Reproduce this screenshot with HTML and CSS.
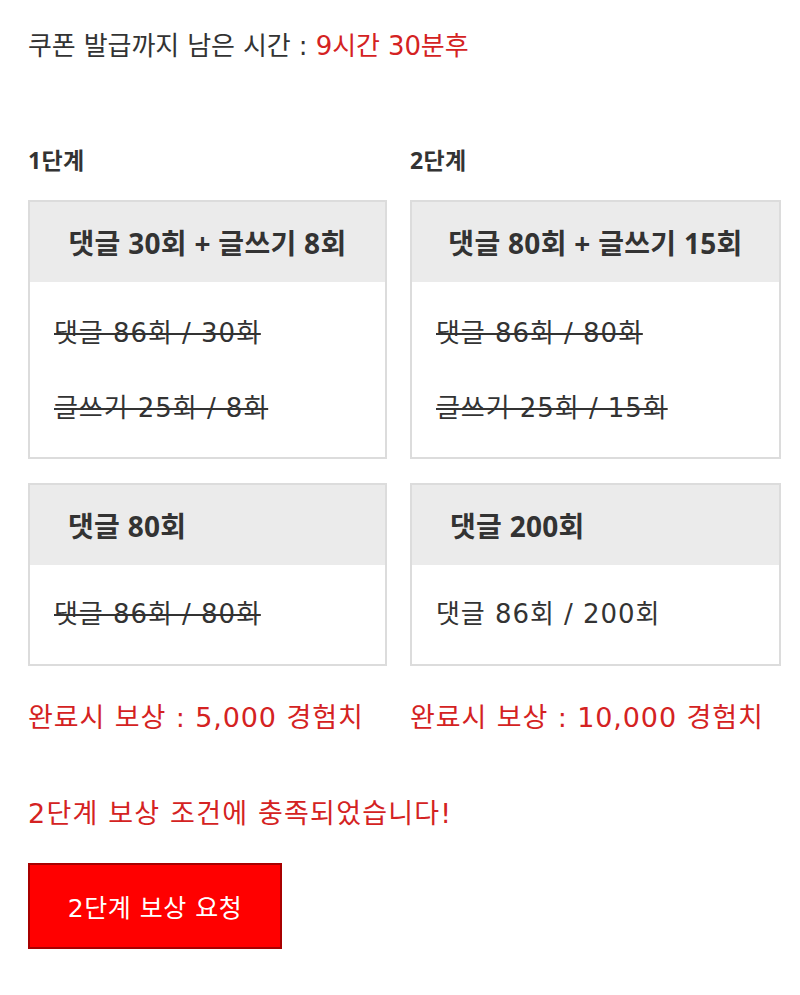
FILE: index.html
```html
<!DOCTYPE html>
<html lang="ko">
<head>
<meta charset="utf-8">
<link rel="stylesheet" href="styles.css">
</head>
<body>
<div class="page">
  <p class="timer">쿠폰 발급까지 남은 시간 : <span class="red">9시간 30분후</span></p>
  <div class="stages">
    <div class="stage-label">1단계</div>
    <div class="stage-label">2단계</div>

    <div class="card">
      <div class="card-head center">댓글 30회 + 글쓰기 8회</div>
      <div class="card-body two">
        <div class="line done">댓글 86회 / 30회</div>
        <div class="line done">글쓰기 25회 / 8회</div>
      </div>
    </div>
    <div class="card">
      <div class="card-head center">댓글 80회 + 글쓰기 15회</div>
      <div class="card-body two">
        <div class="line done">댓글 86회 / 80회</div>
        <div class="line done">글쓰기 25회 / 15회</div>
      </div>
    </div>

    <div class="card">
      <div class="card-head left">댓글 80회</div>
      <div class="card-body one">
        <div class="line done">댓글 86회 / 80회</div>
      </div>
    </div>
    <div class="card">
      <div class="card-head left">댓글 200회</div>
      <div class="card-body one">
        <div class="line">댓글 86회 / 200회</div>
      </div>
    </div>

    <div class="reward">완료시 보상 : 5,000 경험치</div>
    <div class="reward">완료시 보상 : 10,000 경험치</div>
  </div>
  <p class="message">2단계 보상 조건에 충족되었습니다!</p>
  <button class="request">2단계 보상 요청</button>
</div>
</body>
</html>
```
FILE: styles.css
```css
html, body {
  margin: 0;
  padding: 0;
  background: #ffffff;
}
body {
  font-family: "DejaVu Sans", "Noto Sans CJK KR", sans-serif;
  color: #333333;
}
.page {
  padding: 26px 0 0 28px;
}
.timer {
  margin: 0;
  font-size: 26px;
  line-height: 40px;
  letter-spacing: -0.1px;
}
.red {
  color: #d42222;
}
.stages {
  display: grid;
  grid-template-columns: 359px 371px;
  column-gap: 23px;
  margin-top: 79px;
}
.stage-label {
  font-family: "Open Sans", "Noto Sans CJK KR", sans-serif;
  font-size: 23px;
  font-weight: 700;
  line-height: 30px;
  margin-bottom: 25px;
  letter-spacing: 0.4px;
}
.card {
  border: 2px solid #dcdcdc;
  margin-bottom: 24px;
}
.card-head {
  background: #ebebeb;
  height: 80px;
  display: flex;
  align-items: center;
  font-family: "Open Sans", "Noto Sans CJK KR", sans-serif;
  font-size: 28px;
  font-weight: 700;
  letter-spacing: 0.3px;
}
.card-head.center {
  justify-content: center;
}
.card-head.left {
  padding-left: 38px;
}
.card-body {
  padding-left: 24px;
}
.card-body.two {
  padding-top: 31px;
  padding-bottom: 29px;
  display: flex;
  flex-direction: column;
  gap: 35px;
}
.card-body.one {
  padding-top: 29px;
  padding-bottom: 30px;
}
.line {
  font-size: 26px;
  line-height: 40px;
  letter-spacing: 0.95px;
}
.line.done {
  text-decoration: line-through;
  text-decoration-thickness: 2px;
}
.reward {
  color: #d42222;
  font-size: 27px;
  line-height: 40px;
  margin-top: 8px;
  letter-spacing: 0.9px;
}
.message {
  margin: 56px 0 0 0;
  color: #d42222;
  font-size: 27px;
  line-height: 40px;
  letter-spacing: 1.2px;
}
.request {
  margin-top: 29px;
  width: 254px;
  height: 86px;
  background: #ff0000;
  border: 2px solid #a80000;
  color: #ffffff;
  font-family: "DejaVu Sans", "Noto Sans CJK KR", sans-serif;
  font-size: 25px;
  letter-spacing: 0.5px;
  padding: 0;
  display: flex;
  align-items: center;
  justify-content: center;
}
```
